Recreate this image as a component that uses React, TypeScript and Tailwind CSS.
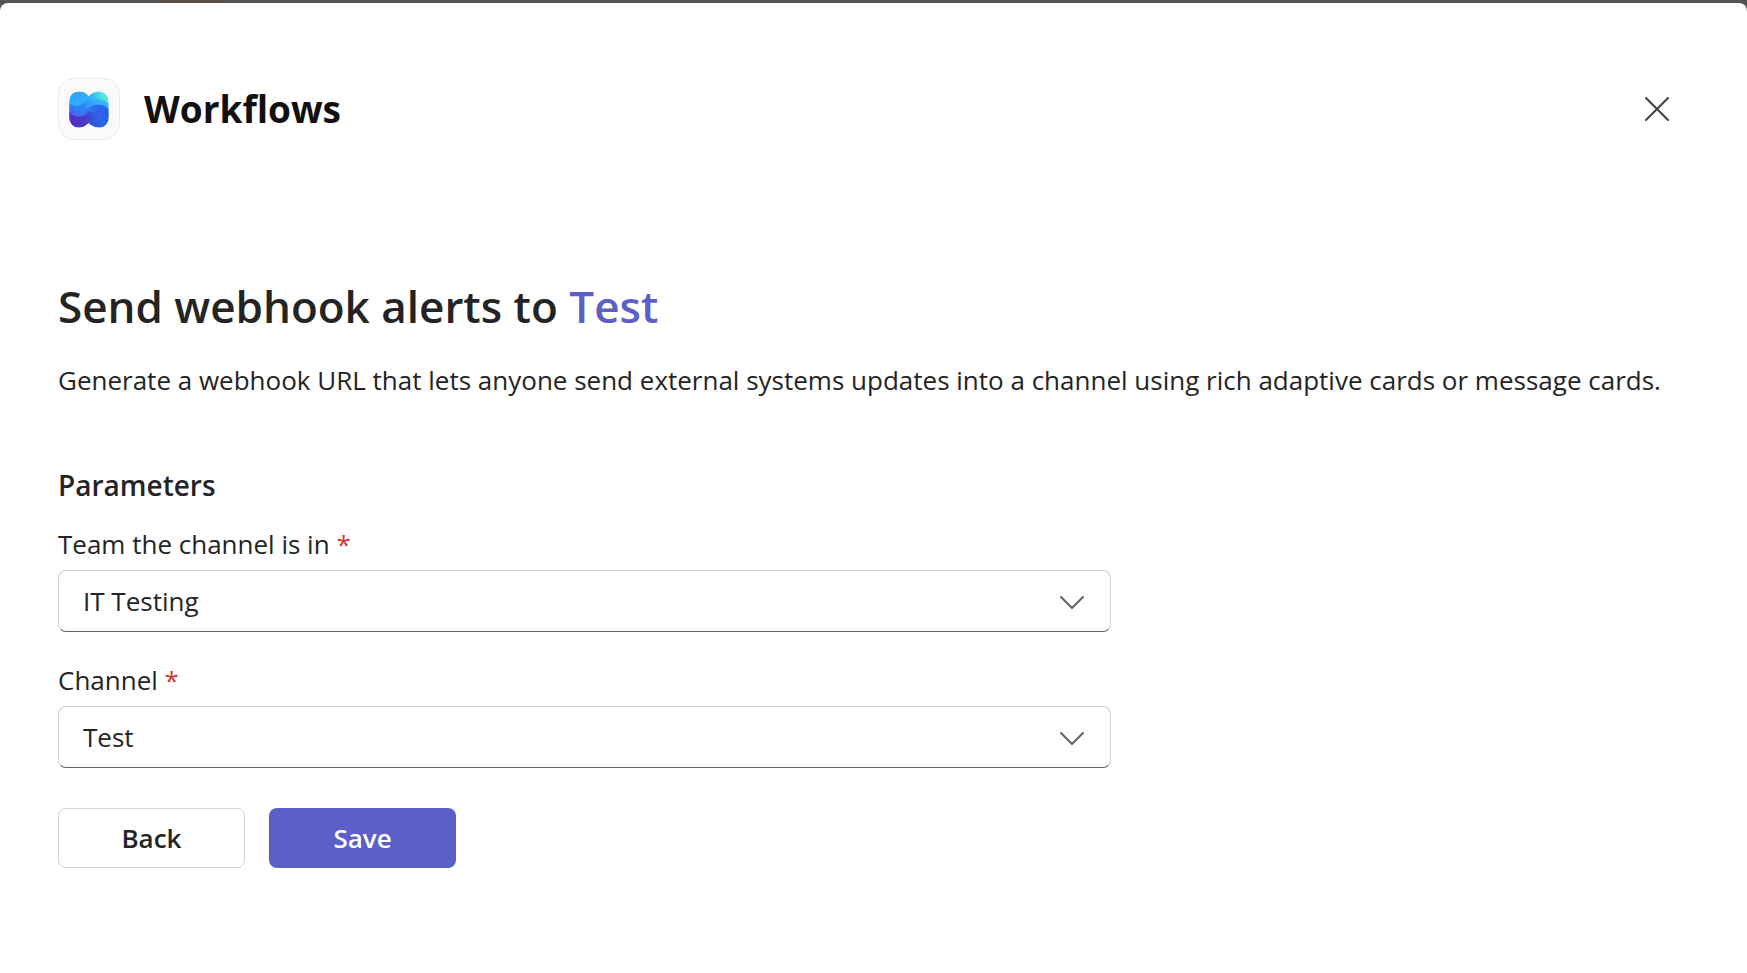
import React, { useState } from "react";

interface SelectFieldProps {
  id: string;
  label: string;
  value: string;
  options: string[];
  onChange: (value: string) => void;
}

const WorkflowsLogo = (): JSX.Element => (
  <svg width="40" height="37" viewBox="59 62 120 110" fill="none" aria-hidden="true">
    <defs>
      <clipPath id="shape">
        <path d="M89 63C102 63 110 69 118 77C126 69 136 63 149 63A29 29 0 0 1 178 92V142A29 29 0 0 1 149 171C136 171 126 165 118 157C110 165 102 171 89 171A29 29 0 0 1 60 142V92A29 29 0 0 1 89 63Z" />
      </clipPath>
      <linearGradient id="top" x1="70" y1="110" x2="172" y2="68" gradientUnits="userSpaceOnUse">
        <stop stopColor="#2b9bfd" />
        <stop offset="0.45" stopColor="#30a8f8" />
        <stop offset="0.7" stopColor="#3ccbee" />
        <stop offset="1" stopColor="#66f0d4" />
      </linearGradient>
      <linearGradient id="lobe" x1="82" y1="66" x2="92" y2="112" gradientUnits="userSpaceOnUse">
        <stop stopColor="#33a4ff" />
        <stop offset="1" stopColor="#30b2ff" />
      </linearGradient>
      <linearGradient id="sky" x1="60" y1="115" x2="178" y2="95" gradientUnits="userSpaceOnUse">
        <stop stopColor="#2c7df2" />
        <stop offset="0.35" stopColor="#2a86f2" />
        <stop offset="0.6" stopColor="#34a8ff" />
        <stop offset="1" stopColor="#35b5ff" />
      </linearGradient>
      <linearGradient id="azure" x1="60" y1="125" x2="178" y2="135" gradientUnits="userSpaceOnUse">
        <stop stopColor="#4467f2" />
        <stop offset="0.4" stopColor="#3d74f6" />
        <stop offset="0.7" stopColor="#3166ec" />
        <stop offset="1" stopColor="#2b5fe4" />
      </linearGradient>
      <linearGradient id="violet" x1="66" y1="150" x2="150" y2="138" gradientUnits="userSpaceOnUse">
        <stop stopColor="#5a2dc0" />
        <stop offset="0.45" stopColor="#4838c6" />
        <stop offset="0.75" stopColor="#3654dc" />
        <stop offset="1" stopColor="#2e62e8" />
      </linearGradient>
    </defs>
    <g clipPath="url(#shape)">
      <path d="M59 62H179V172H59Z" fill="url(#top)" />
      <path d="M59 62H108L118 77L98 99C86 110 68 108 59 96Z" fill="url(#lobe)" />
      {/* waves, top to bottom */}
      <path d="M59 95C68 109 86 110 98 101C112 90 128 85 144 86C160 87 171 92 179 102V172H59Z" fill="url(#sky)" />
      <path d="M59 104C70 122 94 126 110 118C124 108 130 103 145 103C160 103 171 108 179 118V172H59Z" fill="url(#azure)" />
      <path d="M59 122C70 140 96 143 112 130C124 120 138 122 150 134L160 172H59Z" fill="url(#violet)" />
    </g>
  </svg>
);

const SelectField = ({ id, label, value, options, onChange }: SelectFieldProps): JSX.Element => (
  <div className="flex flex-col gap-2">
    <label htmlFor={id} className="text-[26px] leading-9">
      {label} <span className="text-[#d13438]">*</span>
    </label>
    <div className="relative">
      <select
        id={id}
        required
        value={value}
        onChange={(e) => onChange(e.target.value)}
        className="block h-[62px] w-full appearance-none rounded-lg border border-[#d1d1d1] border-b-[#616161] bg-white pl-6 pr-16 text-[26px]"
      >
        {options.map((option) => (
          <option key={option}>{option}</option>
        ))}
      </select>
      <svg
        className="pointer-events-none absolute right-6 top-5 text-[#616161]"
        width="28"
        height="24"
        viewBox="0 0 28 24"
        fill="none"
        stroke="currentColor"
        strokeWidth="2"
        strokeLinecap="round"
        strokeLinejoin="round"
        aria-hidden="true"
      >
        <path d="M2 7l11 11L24 7" />
      </svg>
    </div>
  </div>
);

export default function App(): JSX.Element {
  const [team, setTeam] = useState("IT Testing");
  const [channel, setChannel] = useState("Test");

  return (
    <div className="min-h-screen bg-[#555453] font-['Open_Sans',sans-serif] text-[#242424]">
      {/* dimmed page behind the dialog */}
      <div className="h-[3px] pl-40" aria-hidden="true">
        <div className="h-full w-16 bg-[#5d4d4a]" />
      </div>
      <div role="dialog" aria-labelledby="app-name" className="min-h-[calc(100vh-3px)] rounded-t-lg bg-white px-[58px] pt-[74px] pb-12">
        <header className="flex items-center justify-between">
          <div className="flex items-center gap-6">
            <div className="flex size-[62px] items-center justify-center rounded-2xl border border-[#ebebeb] bg-[#fafafa]">
              <WorkflowsLogo />
            </div>
            <h1 id="app-name" className="text-[37px] leading-[62px] font-bold text-[#111111]">Workflows</h1>
          </div>
          <button type="button" aria-label="Close" className="flex size-16 items-center justify-center text-[#424242]">
            <svg width="26" height="26" viewBox="0 0 26 26" fill="none" stroke="currentColor" strokeWidth="2" strokeLinecap="round">
              <path d="M2 2l22 22M24 2L2 24" />
            </svg>
          </button>
        </header>

        <main className="pt-[135px]">
          <h2 className="text-[44px] leading-[60px] font-semibold">
            Send webhook alerts to <span className="text-[#5b5fc7]">Test</span>
          </h2>
          <p className="pt-[26px] text-[26px] leading-9">
            Generate a webhook URL that lets anyone send external systems updates into a channel using rich adaptive cards or message cards.
          </p>

          <h3 className="pt-[67px] text-[28px] leading-10 font-semibold">Parameters</h3>
          <form className="pt-[21px]" onSubmit={(e) => e.preventDefault()}>
            <div className="flex max-w-[1053px] flex-col gap-[30px]">
              <SelectField id="team" label="Team the channel is in" value={team} options={["IT Testing"]} onChange={setTeam} />
              <SelectField id="channel" label="Channel" value={channel} options={["Test", "General"]} onChange={setChannel} />
            </div>
            <div className="flex gap-6 pt-10">
              <button type="button" className="h-[60px] w-[187px] rounded-lg border border-[#d1d1d1] bg-white text-[26px] font-semibold">
                Back
              </button>
              <button type="submit" className="h-[60px] w-[187px] rounded-lg bg-[#5b5fc7] text-[26px] font-semibold text-white">
                Save
              </button>
            </div>
          </form>
        </main>
      </div>
    </div>
  );
}
